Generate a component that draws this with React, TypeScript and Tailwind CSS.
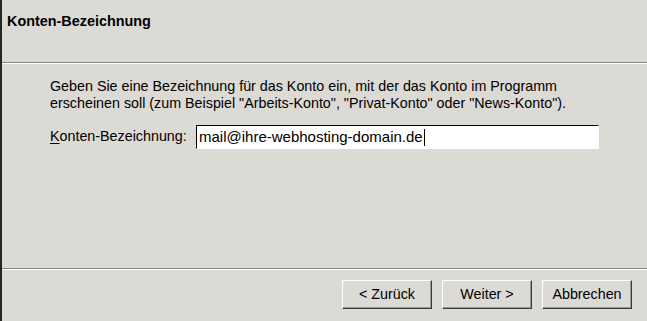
export default function App() {
  return (
    <div
      className="flex h-[321px] w-[647px] flex-col border-l-2 border-[#262626] bg-[#dcdad5] text-[14.3px] text-black"
      style={{ fontFamily: '"Liberation Sans", Arial, sans-serif' }}
    >
      {/* Kopfbereich */}
      <div className="h-[62px] px-[5px] pt-[11px] text-[14.4px] font-bold">Konten-Bezeichnung</div>
      <div className="h-px bg-[#8c8a85]" />
      <div className="h-px bg-white" />

      {/* Inhalt */}
      <div className="flex flex-1 flex-col pl-[48px] pt-[14px]">
        <p className="leading-[17px]">
          Geben Sie eine Bezeichnung für das Konto ein, mit der das Konto im Programm
          <br />
          erscheinen soll (zum Beispiel "Arbeits-Konto", "Privat-Konto" oder "News-Konto").
        </p>
        <div className="mt-[13px] flex items-center">
          <label className="w-[146px]">
            <span className="underline underline-offset-2">K</span>onten-Bezeichnung:
          </label>
          <div className="flex h-[24px] w-[403px] items-center border-t border-l border-t-black border-l-black border-r border-b border-r-white border-b-white bg-white pl-[2px] text-[15px]">
            <span>mail@ihre-webhosting-domain.de</span>
            <span className="ml-px h-[17px] w-px bg-black" />
          </div>
        </div>
      </div>

      <div className="h-px bg-[#8c8a85]" />
      <div className="h-px bg-white" />

      {/* Buttons */}
      <div className="flex h-[51px] items-start justify-end gap-[10px] pr-[15px] pt-[10px]">
        {['< Zurück', 'Weiter >', 'Abbrechen'].map((t) => (
          <button
            key={t}
            className="h-[29px] w-[90px] border border-t-white border-l-white border-r-[#3a3a3a] border-b-[#3a3a3a] bg-[#dcdad5] shadow-[inset_-1px_-1px_0_#9a9892]"
          >
            {t}
          </button>
        ))}
      </div>
    </div>
  );
}
